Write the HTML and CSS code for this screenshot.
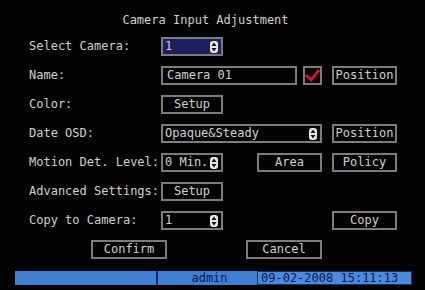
FILE: index.html
```html
<!DOCTYPE html>
<html>
<head>
<meta charset="utf-8">
<link rel="stylesheet" href="styles.css">
</head>
<body>
<div class="screen">
  <div class="title">Camera Input Adjustment</div>
  <div class="form">
    <div class="label">Select Camera:</div>
    <div class="box sel active c2"><span class="val">1</span><svg class="spin" width="8" height="12" viewBox="0 0 8 12"><rect x="0" y="0" width="8" height="12" rx="3" fill="#e8e8e8"/><path d="M4 1.5 L6.5 5 L1.5 5 Z M4 10.5 L6.5 7 L1.5 7 Z" fill="#111"/></svg></div>

    <div class="label">Name:</div>
    <div class="namecell c24"><div class="box text">Camera 01</div><div class="box check"><svg width="17" height="17" viewBox="0 0 17 17"><path d="M1 8 L7 13.5 L16 2" fill="none" stroke="#e0102c" stroke-width="3.2"/></svg></div></div>
    <div class="box btn c6">Position</div>

    <div class="label">Color:</div>
    <div class="box btn c2">Setup</div>

    <div class="label">Date OSD:</div>
    <div class="box sel c24"><span class="val">Opaque&amp;Steady</span><svg class="spin" width="8" height="12" viewBox="0 0 8 12"><rect x="0" y="0" width="8" height="12" rx="3" fill="#e8e8e8"/><path d="M4 1.5 L6.5 5 L1.5 5 Z M4 10.5 L6.5 7 L1.5 7 Z" fill="#111"/></svg></div>
    <div class="box btn c6">Position</div>

    <div class="label">Motion Det. Level:</div>
    <div class="box sel c2"><span class="val">0 Min.</span><svg class="spin" width="8" height="12" viewBox="0 0 8 12"><rect x="0" y="0" width="8" height="12" rx="3" fill="#e8e8e8"/><path d="M4 1.5 L6.5 5 L1.5 5 Z M4 10.5 L6.5 7 L1.5 7 Z" fill="#111"/></svg></div>
    <div class="box btn c4">Area</div>
    <div class="box btn c6">Policy</div>

    <div class="label">Advanced Settings:</div>
    <div class="box btn c2">Setup</div>

    <div class="label">Copy to Camera:</div>
    <div class="box sel c2"><span class="val">1</span><svg class="spin" width="8" height="12" viewBox="0 0 8 12"><rect x="0" y="0" width="8" height="12" rx="3" fill="#e8e8e8"/><path d="M4 1.5 L6.5 5 L1.5 5 Z M4 10.5 L6.5 7 L1.5 7 Z" fill="#111"/></svg></div>
    <div class="box btn c6">Copy</div>
  </div>
  <div class="actions">
    <div class="box btn wide confirm">Confirm</div>
    <div class="box btn wide cancel">Cancel</div>
  </div>
  <div class="status">
    <div class="seg s1"></div>
    <div class="seg s2">admin</div>
    <div class="seg s3">09-02-2008 15:11:13</div>
  </div>
</div>
</body>
</html>
```
FILE: styles.css
```css
html, body {
  margin: 0;
  padding: 0;
  background: #000;
}
.screen {
  width: 425px;
  height: 290px;
  background: #030303;
  font-family: "DejaVu Sans Mono", "Liberation Mono", monospace;
  font-size: 12px;
  color: #d0d0d0;
  padding-top: 12px;
  box-sizing: border-box;
}
.title {
  height: 16px;
  line-height: 16px;
  text-align: center;
  padding-right: 14px;
}
.form {
  margin-top: 9px;
  padding-left: 29px;
  display: grid;
  grid-template-columns: 132px 62px 34px 65px 10px 65px;
  grid-auto-rows: 19px;
  row-gap: 10px;
}
.label {
  grid-column: 1;
  line-height: 19px;
  white-space: nowrap;
}
.c2 { grid-column: 2; }
.c4 { grid-column: 4; }
.c6 { grid-column: 6; }
.c24 { grid-column: 2 / 5; }
.box {
  box-sizing: border-box;
  border: 2px solid #7c7c7c;
  height: 19px;
  line-height: 15px;
  white-space: nowrap;
}
.btn {
  text-align: center;
}
.sel {
  display: flex;
  align-items: center;
  justify-content: space-between;
  padding: 0 3px 0 2px;
}
.sel.active {
  background: #1d1f5e;
}
.spin {
  display: block;
}
.namecell {
  display: flex;
  gap: 6px;
}
.text {
  flex: 1;
  padding-left: 4px;
}
.check {
  width: 19px;
  flex: none;
  display: flex;
  align-items: center;
  justify-content: center;
}
.actions {
  display: flex;
  margin-top: 10px;
}
.wide {
  width: 76px;
}
.confirm {
  margin-left: 91px;
}
.cancel {
  margin-left: 79px;
}
.status {
  display: flex;
  margin: 12px 0 0 15px;
  width: 397px;
  height: 14px;
  background: #3f80d4;
  color: #101848;
  line-height: 14px;
}
.seg {
  box-sizing: border-box;
  height: 14px;
}
.s1 {
  width: 143px;
  border-right: 2px solid #1a2a4a;
}
.s2 {
  width: 99px;
  text-align: center;
  padding-left: 4px;
}
.s3 {
  flex: 1;
  border: 1px solid #1c3060;
  background: #4a8ae0;
  padding-left: 3px;
  line-height: 12px;
}
```
